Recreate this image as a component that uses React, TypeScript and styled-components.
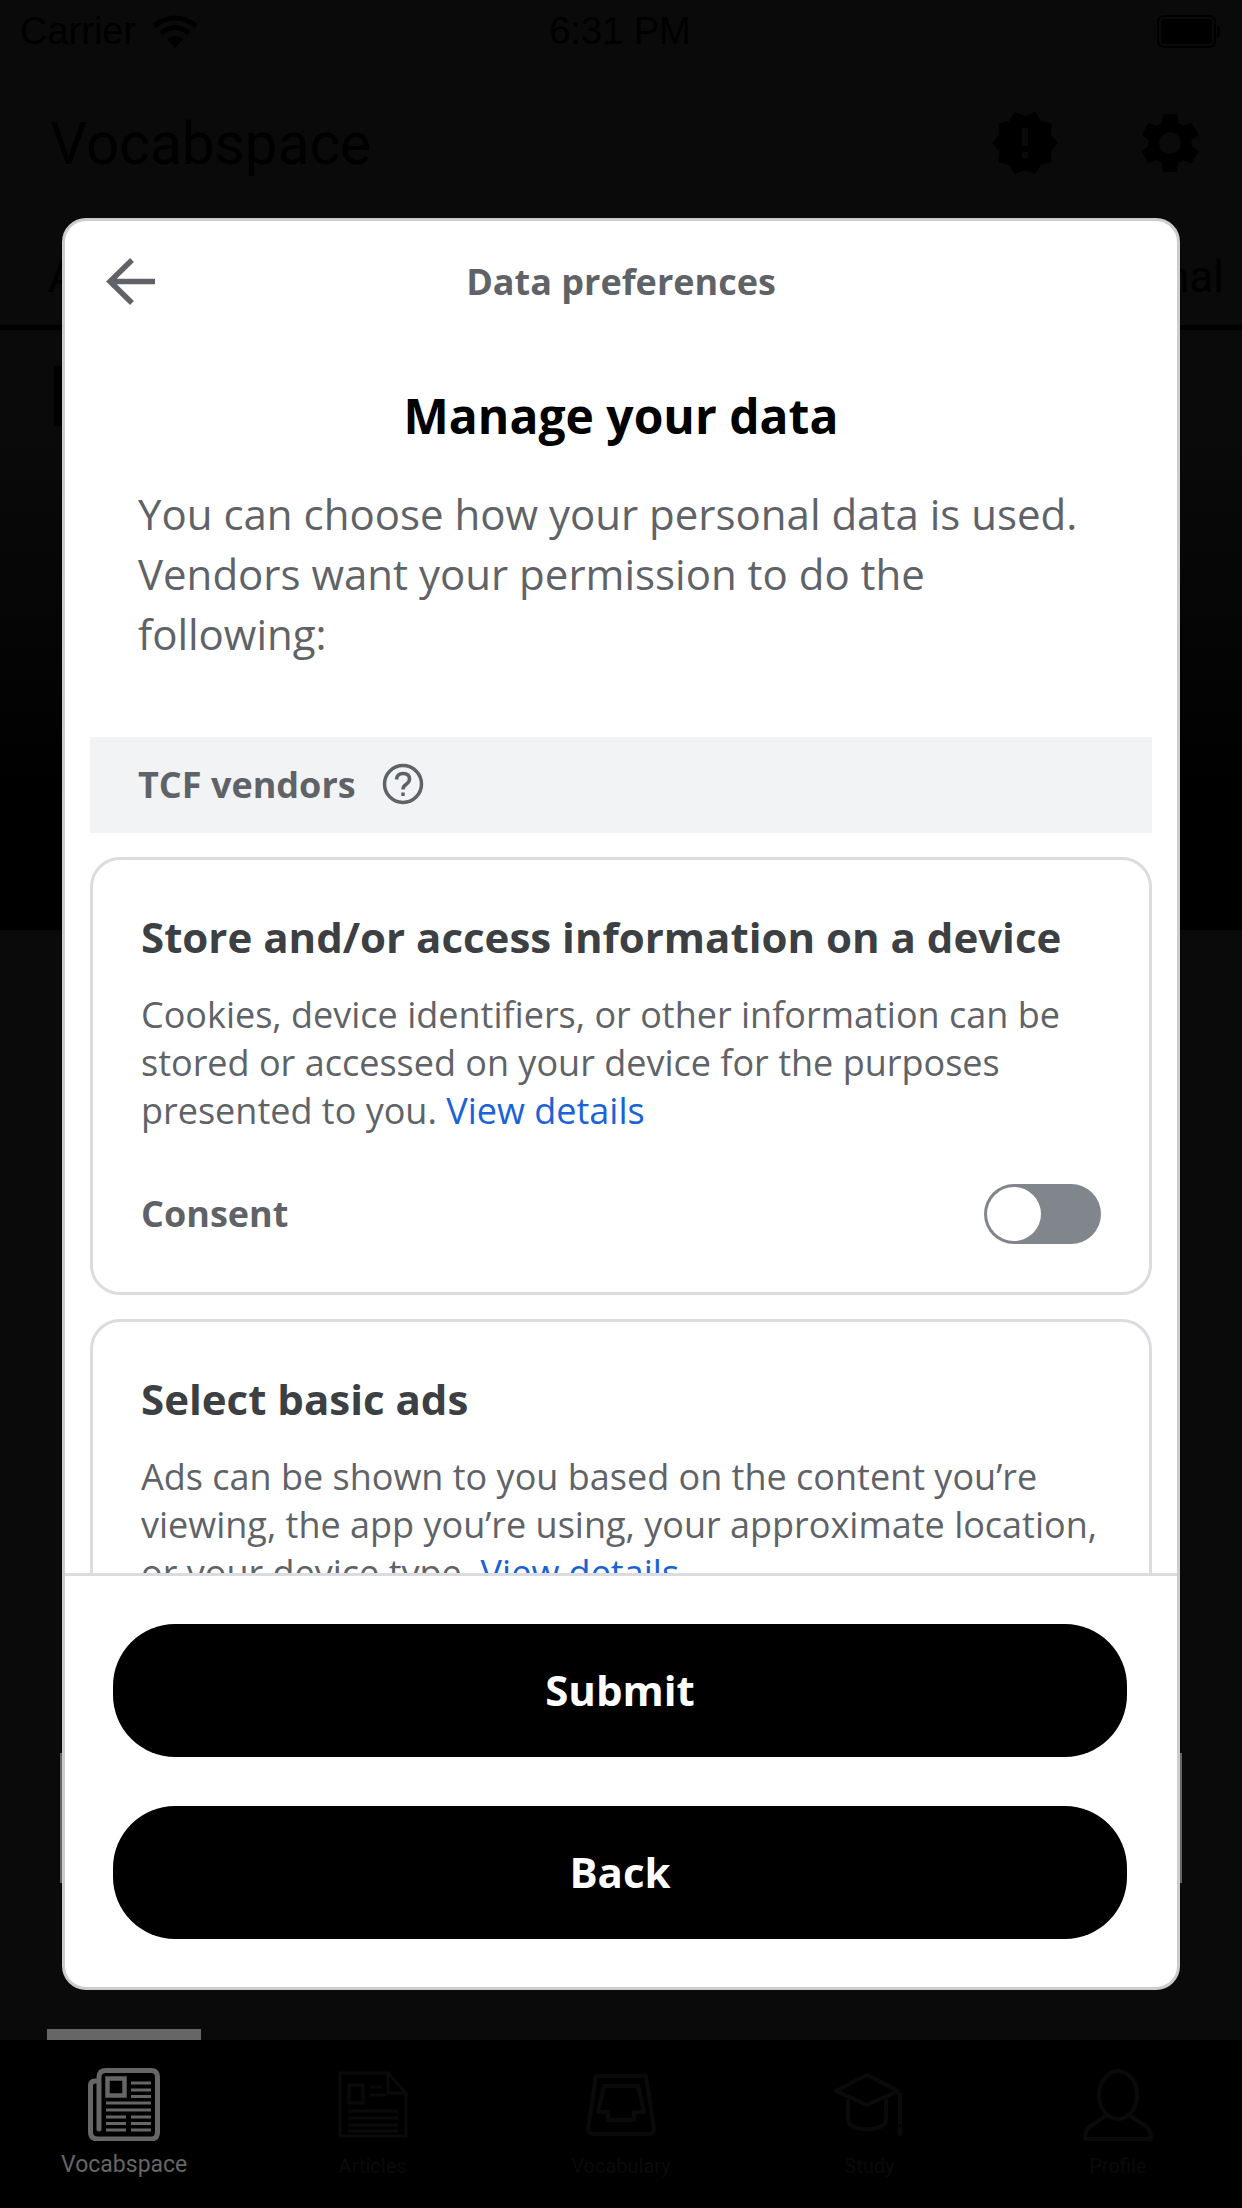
// App.tsx
import React from "react";
import styled, { createGlobalStyle } from "styled-components";
import { MdNewReleases, MdSettings } from "react-icons/md";

const GlobalStyle = createGlobalStyle`
  html, body {
    margin: 0;
    padding: 0;
    background: #0a0a0a;
  }
  * {
    box-sizing: border-box;
  }
`;

const Screen = styled.div`
  position: relative;
  width: 1242px;
  height: 2208px;
  overflow: hidden;
  display: flex;
  flex-direction: column;
  background: #0a0a0a;
  color: #000;
  font-family: "Liberation Sans", Arial, sans-serif;
`;

/* ---- app behind the dimmed overlay ---- */

const StatusBar = styled.div`
  display: grid;
  grid-template-columns: 1fr auto 1fr;
  align-items: center;
  height: 62px;
  padding: 0 22px 0 20px;
  font-size: 38px;
`;

const Carrier = styled.div`
  display: flex;
  align-items: center;
  gap: 16px;
`;

const Battery = styled.svg`
  justify-self: end;
`;

const AppHeader = styled.div`
  display: flex;
  align-items: center;
  justify-content: space-between;
  height: 166px;
  padding: 0 36px 2px 50px;
`;

const AppTitle = styled.div`
  font-family: Roboto, sans-serif;
  font-size: 58.500px;
`;

const HeaderIcons = styled.div`
  display: flex;
  gap: 73px;
  margin-bottom: 2px;
  font-size: 72px;
  line-height: 0;
`;

const TabsRow = styled.div`
  display: flex;
  align-items: center;
  justify-content: space-between;
  height: 102px;
  padding: 0 18px 0 48px;
  border-bottom: 5px solid #000;
  font-family: Roboto, sans-serif;
  font-size: 44px;
`;

const Content = styled.div`
  flex: 1;
  display: flex;
  flex-direction: column;
  padding-top: 36px;
  background: linear-gradient(
    to bottom,
    #0a0a0a 0,
    #0a0a0a 100px,
    #000 470px,
    #000 600px,
    #0a0a0a 600px
  );
`;

const SearchStub = styled.div`
  width: 40px;
  height: 60px;
  margin-left: 54px;
  background: #000;
`;

const BehindCard = styled.div`
  height: 130px;
  margin: 1327px 60px 0;
  border-left: 2px solid #666;
  border-right: 2px solid #666;
`;

const Indicator = styled.div`
  width: 154px;
  height: 11px;
  margin: auto 0 0 47px;
  background: #666;
`;

const TabBar = styled.div`
  display: grid;
  grid-template-columns: repeat(5, 1fr);
  height: 168px;
  background: #000;
`;

const TabItem = styled.div<{ $active?: boolean }>`
  display: flex;
  flex-direction: column;
  align-items: center;
  color: ${(p) => (p.$active ? "#666" : "#0a0a0a")};
`;

const TabIconSlot = styled.div`
  display: flex;
  align-items: center;
  justify-content: center;
  height: 73px;
  margin-top: 28px;
`;

const TabLabel = styled.div<{ $active?: boolean }>`
  margin-top: ${(p) => (p.$active ? "9px" : "10px")};
  font-family: Roboto, sans-serif;
  font-size: ${(p) => (p.$active ? "23px" : "20px")};
  line-height: 30px;
`;

/* ---- consent dialog ---- */

const Dialog = styled.div`
  position: absolute;
  top: 218px;
  left: 62px;
  width: 1118px;
  height: 1772px;
  display: flex;
  flex-direction: column;
  overflow: hidden;
  background: #fff;
  border: 3px solid #ccc;
  border-radius: 24px;
  font-family: "Open Sans", sans-serif;
`;

const DialogHeader = styled.div`
  display: grid;
  grid-template-columns: 1fr auto 1fr;
  align-items: center;
  height: 120px;
  padding: 0 41px;
  flex-shrink: 0;
`;

const BackButton = styled.button`
  display: flex;
  width: 49px;
  height: 47px;
  padding: 0;
  border: none;
  background: none;
`;

const DialogTitle = styled.div`
  font-size: 36px;
  font-weight: 700;
  color: #5f6368;
`;

const Scroller = styled.div`
  flex: 1;
  min-height: 0;
  overflow: hidden;
  padding: 0 25px;
`;

const Heading = styled.h1`
  margin: 50px 0 0;
  font-size: 48px;
  font-weight: 700;
  line-height: 50px;
  text-align: center;
  color: #000;
`;

const Intro = styled.p`
  margin: 43px 0 0;
  padding: 0 48px;
  font-size: 42px;
  line-height: 60px;
  color: #5f6368;
`;

const SectionBar = styled.div`
  display: flex;
  align-items: center;
  gap: 26px;
  height: 96px;
  margin-top: 73px;
  padding: 0 48px 2px;
  background: #f1f3f4;
  font-size: 36px;
  font-weight: 700;
  color: #5f6368;
`;

const PurposeCard = styled.div`
  margin-top: 24px;
  padding: 52px 48px 0;
  height: 438px;
  border: 3px solid #dadce0;
  border-radius: 30px;
`;

const PurposeTitle = styled.h2`
  margin: 0;
  font-size: 42px;
  font-weight: 700;
  line-height: 50px;
  color: #3c4043;
`;

const PurposeText = styled.p`
  margin: 29px 0 0;
  font-size: 36px;
  line-height: 48px;
  color: #5f6368;
`;

const DetailsLink = styled.a`
  color: #1a62d6;
`;

const ConsentRow = styled.div`
  display: flex;
  align-items: center;
  justify-content: space-between;
  margin-top: 49px;
  font-size: 36px;
  font-weight: 700;
  color: #5f6368;
`;

const ConsentLabel = styled.span`
  margin-bottom: 2px;
`;

const Toggle = styled.div`
  display: flex;
  align-items: center;
  width: 117px;
  height: 60px;
  padding: 3px;
  border-radius: 30px;
  background: #80868b;
`;

const ToggleKnob = styled.div`
  width: 54px;
  height: 54px;
  border-radius: 50%;
  background: #fff;
`;

const DialogFooter = styled.div`
  display: flex;
  flex-direction: column;
  gap: 49px;
  flex-shrink: 0;
  padding: 48px 50px 48px 48px;
  border-top: 3px solid #dadce0;
`;

const ActionButton = styled.button`
  height: 133px;
  padding: 0 0 3px;
  border: none;
  border-radius: 62px;
  background: #000;
  color: #fff;
  font-family: "Open Sans", sans-serif;
  font-size: 42px;
  font-weight: 700;
`;

const WifiIcon = () => (
  <svg width="46" height="33" viewBox="0 0 46 33" fill="none" stroke="currentColor" strokeWidth="5">
    <path d="M2 11Q23 -5 44 11" />
    <path d="M9 18Q23 7 37 18" />
    <path d="M23 33L15 24Q23 18 31 24Z" fill="currentColor" stroke="none" />
  </svg>
);

const NewspaperIcon = () => (
  <svg width="72" height="73" viewBox="0 0 72 73" fill="none" stroke="currentColor">
    <path
      d="M11 13H7Q2.500 13 2.500 18V64Q2.500 71 10 71H63Q69.500 71 69.500 64V9Q69.500 2.500 63 2.500H18Q11 2.500 11 9V61"
      strokeWidth="5"
      strokeLinecap="round"
    />
    <rect x="19.500" y="10.500" width="17" height="17" strokeWidth="4.500" />
    <path
      d="M43 15H63M43 22H63M43 28.500H63M18 35H63M18 42H63M18 49H38M43 49H63M18 55.500H38M43 55.500H63M18 62H38M43 62H63"
      strokeWidth="2.800"
    />
  </svg>
);

const ArticleIcon = () => (
  <svg width="70" height="67" viewBox="0 0 70 67" fill="none" stroke="currentColor" strokeWidth="3">
    <path d="M2 2H50L68 22V65H2Z" strokeLinejoin="round" />
    <path d="M50 2V22H68" />
    <rect x="11" y="14" width="14" height="18" />
    <path d="M32 16H44M32 24H48M10 40H60M10 47H60M10 54H60M10 60H60" />
  </svg>
);

const TrayIcon = () => (
  <svg width="70" height="62" viewBox="0 0 70 62" fill="none" stroke="currentColor" strokeWidth="4">
    <path d="M10 2H60L68 55Q68 60 62 60H8Q2 60 2 55Z" strokeLinejoin="round" />
    <path d="M18 12H52L58 38H48V46H22V38H12Z" strokeLinejoin="round" />
  </svg>
);

const CapIcon = () => (
  <svg width="70" height="64" viewBox="0 0 70 64" fill="none" stroke="currentColor" strokeWidth="4">
    <path d="M33 2L64 18L33 32L2 18Z" strokeLinejoin="round" />
    <path d="M14 26V46Q14 56 33 56Q52 56 52 46V26" />
    <path d="M66 20V52" />
    <ellipse cx="66" cy="58" rx="2.500" ry="5" fill="currentColor" stroke="none" />
  </svg>
);

const PersonIcon = () => (
  <svg width="70" height="72" viewBox="0 0 70 72" fill="none" stroke="currentColor" strokeWidth="4">
    <ellipse cx="35" cy="26" rx="19" ry="24" />
    <path d="M24 46L6 58Q2 62 2 70H68Q68 62 64 58L46 46" strokeLinejoin="round" />
  </svg>
);

const tabs = [
  { label: "Vocabspace", icon: <NewspaperIcon />, active: true },
  { label: "Articles", icon: <ArticleIcon /> },
  { label: "Vocabulary", icon: <TrayIcon /> },
  { label: "Study", icon: <CapIcon /> },
  { label: "Profile", icon: <PersonIcon /> },
];

const App: React.FC = () => (
  <>
    <GlobalStyle />
    <Screen>
      <StatusBar>
        <Carrier>
          Carrier
          <WifiIcon />
        </Carrier>
        <div>6:31 PM</div>
        <Battery width="63" height="33" viewBox="0 0 63 33">
          <rect x="1" y="1" width="57" height="31" rx="6" fill="none" stroke="#000" strokeWidth="2" />
          <rect x="4" y="4" width="51" height="25" rx="3" fill="#000" />
          <rect x="60" y="11" width="3" height="11" rx="1" fill="#000" />
        </Battery>
      </StatusBar>
      <AppHeader>
        <AppTitle>Vocabspace</AppTitle>
        <HeaderIcons>
          <MdNewReleases />
          <MdSettings />
        </HeaderIcons>
      </AppHeader>
      <TabsRow>
        <span>All</span>
        <span>Journal</span>
      </TabsRow>
      <Content>
        <SearchStub />
        <BehindCard />
        <Indicator />
      </Content>
      <TabBar>
        {tabs.map((tab) => (
          <TabItem key={tab.label} $active={tab.active}>
            <TabIconSlot>{tab.icon}</TabIconSlot>
            <TabLabel $active={tab.active}>{tab.label}</TabLabel>
          </TabItem>
        ))}
      </TabBar>

      <Dialog>
        <DialogHeader>
          <BackButton aria-label="Back">
            <svg width="49" height="47" viewBox="0 0 49 47" fill="none" stroke="#5f6368" strokeWidth="5.500">
              <path d="M26 2L4 23.500L26 45M4 23.500H49" />
            </svg>
          </BackButton>
          <DialogTitle>Data preferences</DialogTitle>
        </DialogHeader>
        <Scroller>
          <Heading>Manage your data</Heading>
          <Intro>
            You can choose how your personal data is used. Vendors want your
            permission to do the following:
          </Intro>
          <SectionBar>
            TCF vendors
            <svg width="42" height="42" viewBox="0 0 42 42" fill="none" stroke="#5f6368" strokeWidth="3.500">
              <circle cx="21" cy="21" r="18.500" />
              <path d="M14.500 16.500Q15 10.500 21 10.500Q27.500 10.500 27.500 16Q27.500 19 24 21.500Q21 23.500 21 26.500" />
              <path d="M21 29.500V33" />
            </svg>
          </SectionBar>
          <PurposeCard>
            <PurposeTitle>Store and/or access information on a device</PurposeTitle>
            <PurposeText>
              Cookies, device identifiers, or other information can be stored or
              accessed on your device for the purposes presented to you.{" "}
              <DetailsLink>View details</DetailsLink>
            </PurposeText>
            <ConsentRow>
              <ConsentLabel>Consent</ConsentLabel>
              <Toggle>
                <ToggleKnob />
              </Toggle>
            </ConsentRow>
          </PurposeCard>
          <PurposeCard>
            <PurposeTitle>Select basic ads</PurposeTitle>
            <PurposeText>
              Ads can be shown to you based on the content you’re viewing, the
              app you’re using, your approximate location, or your device type.{" "}
              <DetailsLink>View details</DetailsLink>
            </PurposeText>
          </PurposeCard>
        </Scroller>
        <DialogFooter>
          <ActionButton>Submit</ActionButton>
          <ActionButton>Back</ActionButton>
        </DialogFooter>
      </Dialog>
    </Screen>
  </>
);

export default App;
